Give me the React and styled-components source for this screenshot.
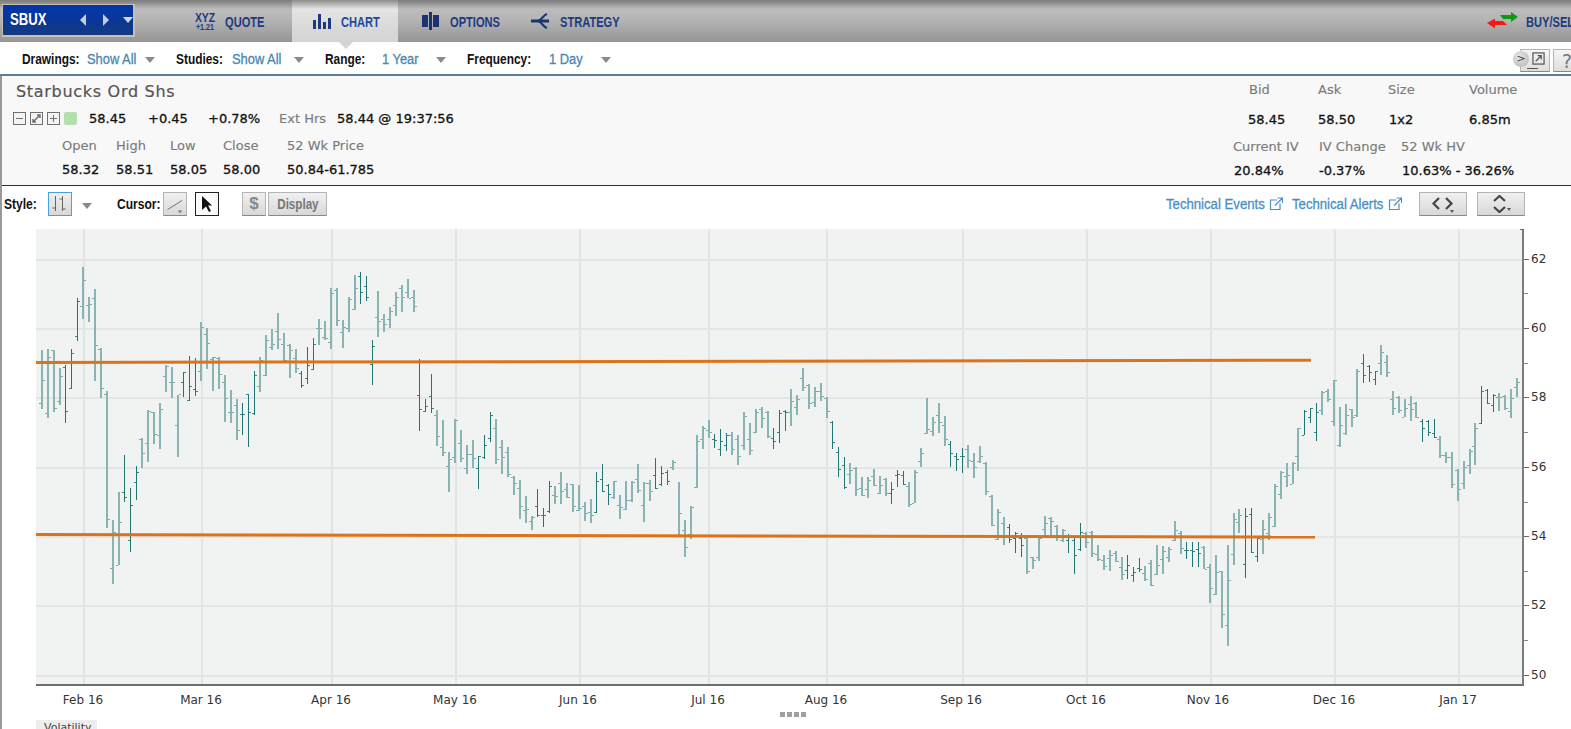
import React from 'react';
import styled, { createGlobalStyle } from 'styled-components';

// high, low, open, close as y pixels of the plot
const bars = [
    [350,409,403,380],[349,418,413,357],[350,412,350,408],[368,405,401,376],[365,423,367,411],[349,389,388,353],[298,341,336,301],[267,319,306,280],[297,322,305,304],[289,381,298,345],
    [348,398,349,388],[391,528,394,519],[520,584,568,532],[492,565,565,522],[455,502,492,497],[488,552,540,505],[466,500,482,472],[438,468,439,453],[410,462,443,411],[412,444,412,434],
    [403,449,435,409],[365,392,376,366],[367,398,382,382],[395,457,425,394],[372,397,382,372],[356,401,400,386],[358,396,389,391],[322,381,371,327],[328,369,334,343],[357,391,359,357],
    [357,389,358,374],[375,422,382,398],[390,423,412,412],[399,440,405,430],[403,435,414,414],[394,447,394,412],[371,415,413,375],[357,392,386,360],[335,376,375,340],[329,350,347,344],
    [313,349,331,339],[333,361,344,360],[344,378,345,350],[349,373,358,368],[371,388,373,385],[347,384,378,365],[338,370,369,344],[319,345,328,328],[321,340,337,338],[288,349,342,293],
    [288,326,290,320],[320,348,332,327],[297,332,328,299],[275,310,309,288],[272,304,276,292],[276,301,286,297],[340,385,364,346],[291,337,317,321],[314,332,319,324],[307,328,319,311],
    [292,316,305,297],[285,312,288,297],[279,298,292,298],[290,312,297,306],[359,431,395,409],[399,412,411,406],[374,413,396,408],[410,446,415,436],[420,456,447,452],[452,492,466,459],
    [419,463,457,420],[430,462,443,458],[445,474,468,454],[440,468,454,458],[456,489,468,456],[435,459,457,445],[412,442,438,415],[419,464,428,459],[440,474,447,457],[447,477,452,474],
    [476,495,477,483],[480,519,488,506],[496,523,510,509],[516,530,521,517],[489,517,506,515],[508,527,515,515],[481,513,511,486],[486,504,495,496],[472,504,483,491],[483,498,489,497],
    [484,512,484,506],[485,511,510,508],[502,521,506,513],[499,523,512,515],[472,513,512,481],[464,492,479,491],[484,505,485,494],[481,499,497,481],[495,519,505,507],[481,510,509,500],
    [481,502,500,482],[464,493,479,490],[482,522,505,483],[480,501,483,491],[458,489,475,488],[466,486,484,473],[470,485,472,481],[460,470,467,462],[482,535,535,513],[520,557,530,547],
    [506,539,534,507],[435,488,487,441],[426,449,439,428],[420,438,430,432],[434,448,439,440],[429,456,449,441],[433,451,445,435],[432,455,435,449],[435,465,439,456],[412,450,445,416],
    [423,455,439,450],[409,433,432,412],[407,428,409,418],[411,438,412,436],[428,449,438,441],[410,443,432,413],[410,431,411,412],[389,426,412,401],[395,415,407,399],[368,391,378,387],
    [384,409,385,403],[387,407,402,391],[383,401,391,396],[397,418,398,411],[421,449,422,442],[447,477,452,469],[457,489,465,487],[463,484,474,470],[467,496,468,489],[477,496,488,495],
    [477,498,489,480],[469,486,476,485],[476,494,493,485],[478,496,479,493],[482,504,493,489],[470,487,475,474],[471,485,475,484],[482,507,486,504],[470,503,503,472],[448,467,461,453],
    [398,434,433,429],[417,436,431,422],[403,433,415,422],[416,446,425,439],[441,467,444,453],[453,471,456,459],[448,473,456,456],[445,468,449,460],[453,478,461,467],[446,463,461,456],
    [462,495,463,491],[495,526,496,525],[509,540,539,512],[517,545,523,537],[524,543,527,539],[532,553,538,533],[533,557,538,545],[537,574,538,571],[557,569,557,560],[537,561,557,538],
    [516,537,529,523],[517,537,518,521],[525,541,526,535],[529,542,540,530],[534,553,540,536],[537,574,540,555],[523,551,549,532],[532,548,533,542],[531,557,532,553],[545,561,554,559],
    [555,570,560,566],[550,571,558,555],[551,562,553,561],[557,580,567,574],[555,579,570,565],[567,582,575,572],[558,572,568,569],[566,581,573,579],[560,586,563,585],[545,575,574,565],
    [546,574,559,551],[547,562,557,549],[521,541,540,530],[531,554,533,548],[542,559,550,550],[542,567,550,551],[542,567,549,553],[546,569,547,569],[564,603,567,588],[555,595,594,572],
    [571,628,571,614],[545,646,625,580],[513,565,554,519],[509,533,522,515],[508,578,564,516],[508,553,514,552],[538,562,556,538],[520,554,539,529],[513,540,533,517],[484,527,526,486],
    [471,499,494,472],[463,487,476,475],[462,484,484,463],[428,471,456,428],[410,435,435,411],[408,423,417,408],[403,441,432,412],[391,415,410,392],[389,402,391,399],[380,426,421,380],
    [407,447,445,425],[404,435,433,415],[409,427,409,417],[369,417,415,371],[354,383,363,375],[365,382,366,372],[371,385,379,371],[345,375,363,352],[355,377,362,372],[391,415,399,408],
    [396,413,397,410],[399,417,417,408],[396,421,404,409],[402,418,403,417],[419,442,421,428],[420,436,421,432],[419,438,433,437],[436,458,439,455],[452,463,455,457],[452,488,457,484],
    [469,501,470,489],[461,489,483,467],[449,474,465,451],[423,465,446,428],[386,424,423,391],[389,404,390,403],[394,412,405,395],[393,411,397,397],[395,410,396,408],[389,418,411,398],
    [378,397,387,382],
];

const gridX = [83, 201, 331, 455, 579, 708, 826, 962, 1086, 1210, 1334, 1458];
const gridY = [259, 328, 397, 467, 536, 605, 675];
const months = [
    [83, 'Feb 16'], [201, 'Mar 16'], [331, 'Apr 16'], [455, 'May 16'], [578, 'Jun 16'], [708, 'Jul 16'],
    [826, 'Aug 16'], [961, 'Sep 16'], [1086, 'Oct 16'], [1208, 'Nov 16'], [1334, 'Dec 16'], [1458, 'Jan 17'],
];
const prices = [[259, 62], [328, 60], [397, 58], [467, 56], [536, 54], [605, 52], [675, 50]];
const minorY = [293, 363, 432, 502, 571, 640];

const StockChart = () => {
    return <ChartSvg viewBox="36 225 1535 485">
        <rect x="36" y="229" width="1487" height="455" fill="#f1f3f3" />
        {gridY.map(y => <rect key={y} x="36" y={y} width="1487" height="2" fill="#e4e6e6" />)}
        {gridX.map(x => <rect key={x} x={x} y="229" width="2" height="455" fill="#e2e4e4" />)}
        {bars.map((bar, i) => {
            const x = 42 + 5.899 * i;
            const dark = [4, 5, 6].includes(i % 10);
            const px = dark ? Math.floor(x) : Math.round(x) - 1;
            const w = dark ? 1 : 2;
            return <g key={i}>
                <rect x={px} y={bar[0]} width={w} height={bar[1] - bar[0]} fill={dark ? '#217673' : '#8ab4b3'} />
                <rect x={px - 2} y={bar[2]} width="2" height="1" fill={dark ? '#3a8784' : '#7dabaa'} />
                <rect x={px + w} y={bar[3]} width="2" height="1" fill={dark ? '#3a8784' : '#7dabaa'} />
            </g>;
        })}
        <TrendLine x1="36" y1="362.500" x2="1311" y2="360.300" />
        <TrendLine x1="36" y1="534.500" x2="1315" y2="537" />
        <rect x="36" y="684" width="1488" height="2" fill="#6e6e6e" />
        <rect x="1522" y="229" width="2" height="456" fill="#7c7c7c" />
        <path d="M1524 229h-4" stroke="#666" fill="none" />
        {prices.map(([y]) => <rect key={y} x="1524" y={y} width="5" height="1" fill="#666" />)}
        {minorY.map(y => <rect key={y} x="1524" y={y} width="4" height="1" fill="#888" />)}
        {prices.map(([y, label]) => <AxisText key={label} x="1531" y={y + 4}>{label}</AxisText>)}
        {months.map(([x, label]) => <AxisText key={label} x={x} y="704" textAnchor="middle">{label}</AxisText>)}
    </ChartSvg>;
};

const ChartIcon = () => <svg width="18" height="16" viewBox="0 0 18 16" fill="#1d3a80">
    <rect x="0" y="7" width="3" height="9" /><rect x="5" y="1" width="3" height="15" /><rect x="10" y="9" width="3" height="7" /><rect x="15" y="5" width="3" height="11" />
</svg>;

const OptionsIcon = () => <svg width="18" height="18" viewBox="0 0 18 18" fill="#1b3371">
    <rect x="0" y="3" width="6" height="12" /><rect x="7" y="0" width="3" height="18" /><rect x="11" y="3" width="6" height="12" />
</svg>;

const StrategyIcon = () => <svg width="19" height="18" viewBox="0 0 19 18" fill="none" stroke="#1b3371" strokeWidth="2">
    <path d="M0 9h18" strokeWidth="3" /><path d="M7 9C11 8 12 3 16 2M7 9c4 1 5 6 9 7" />
</svg>;

const BuySellIcon = () => <svg width="31" height="18" viewBox="0 0 31 18">
    <path d="M13 3h11V0l7 5-7 5V7H16z" fill="#0c9a12" />
    <path d="M20 13H8v3.500L0 11l8-4.500V9h8z" fill="#f01a1a" />
</svg>;

const LinkIcon = () => <svg width="14" height="14" viewBox="0 0 14 14" fill="none" stroke="#4a90c4" strokeWidth="1.2">
    <path d="M8 3H1.500v9.500H11V6.500M6 8.500L13 1.500M8.500 1h5v5" />
</svg>;

const StyleIcon = () => <svg width="18" height="16" viewBox="0 0 18 16" fill="none" stroke="#666" strokeWidth="1">
    <path d="M4.500 0v15M1.500 12h3M11.500 0v15M8.500 3h3M11.500 13h3" />
</svg>;

const LineToolIcon = () => <svg width="24" height="22" viewBox="0 0 24 22" fill="none" stroke="#666" strokeWidth="1">
    <path d="M4 17L20 7" /><path d="M15 18h5l-2.500 3z" fill="#777" stroke="none" />
</svg>;

const PointerIcon = () => <svg width="12" height="16" viewBox="0 0 12 16" fill="#111">
    <path d="M1 0l10 9.500H7l3 5.500-2 1-3-5.500-4 3.500z" />
</svg>;

const HArrowsIcon = () => <svg width="24" height="18" viewBox="0 0 24 18" fill="none" stroke="#444" strokeWidth="2.200">
    <path d="M8 3L2.500 8.500 8 14M15 3l5.500 5.500L15 14" /><path d="M19 15h4l-2 3z" fill="#555" stroke="none" />
</svg>;

const VArrowsIcon = () => <svg width="24" height="18" viewBox="0 0 24 18" fill="none" stroke="#444" strokeWidth="2.200">
    <path d="M5 6l5.500-5L16 6M5 12l5.500 5 5.500-5" /><path d="M18 13h4l-2 3z" fill="#555" stroke="none" />
</svg>;

const BoxIcon = ({ kind }) => <svg width="13" height="13" viewBox="0 0 13 13" fill="none" stroke="#707070">
    <rect x="0.500" y="0.500" width="12" height="12" fill="#f4f4f4" />
    {kind === 'minus' && <path d="M3 6.500h7" />}
    {kind === 'plus' && <path d="M3 6.500h7M6.500 3v7" />}
    {kind === 'pop' && <path d="M3 10L10 3M7 3h3v3M3 7v3h3" strokeWidth="1.500" />}
</svg>;

const App = () => {
    return <Page>
        <GlobalStyle />
        <Nav>
            <Ticker>
                <TickerName>SBUX</TickerName>
                <TickerArrow $dir="left" />
                <TickerArrow $dir="right" />
                <TickerDrop />
            </Ticker>
            <NavItem $width={157} $pad={60}>
                <QuoteIcon><span>XYZ</span><small>+1.21</small></QuoteIcon>
                <NavLabel>QUOTE</NavLabel>
            </NavItem>
            <NavItem $width={106} $pad={21} $active>
                <ChartIcon />
                <NavLabel>CHART</NavLabel>
                <TabCaret />
            </NavItem>
            <NavItem $width={118} $pad={24}>
                <OptionsIcon />
                <NavLabel>OPTIONS</NavLabel>
            </NavItem>
            <NavItem $width={120} $pad={15}>
                <StrategyIcon />
                <NavLabel>STRATEGY</NavLabel>
            </NavItem>
            <BuySell>
                <BuySellIcon />
                <NavLabel>BUY/SELL</NavLabel>
            </BuySell>
        </Nav>

        <Filters>
            <FilterGroup $width={154}>
                <FilterLabel $width={65}>Drawings:</FilterLabel>
                <FilterValue $width={58}>Show All</FilterValue>
                <Caret />
            </FilterGroup>
            <FilterGroup $width={149}>
                <FilterLabel $width={56}>Studies:</FilterLabel>
                <FilterValue $width={62}>Show All</FilterValue>
                <Caret />
            </FilterGroup>
            <FilterGroup $width={142}>
                <FilterLabel $width={57}>Range:</FilterLabel>
                <FilterValue $width={54}>1 Year</FilterValue>
                <Caret />
            </FilterGroup>
            <FilterGroup $width={150}>
                <FilterLabel $width={82}>Frequency:</FilterLabel>
                <FilterValue $width={52}>1 Day</FilterValue>
                <Caret />
            </FilterGroup>
            <WindowButtons>
                <RoundToggle>&gt;</RoundToggle>
                <WindowButton $end>
                    <svg width="13" height="13" viewBox="0 0 14 14" fill="none" stroke="#555" strokeWidth="1.300">
                        <rect x="1" y="1" width="12" height="12" /><path d="M4 10l6-6M6 4h4v4" />
                    </svg>
                    <WindowDash />
                </WindowButton>
                <WindowButton>?</WindowButton>
            </WindowButtons>
        </Filters>

        <Content>
            <QuotePanel>
                <QuoteLeft>
                    <Title>Starbucks Ord Shs</Title>
                    <QuoteRow $pad={13} $height={24}>
                        <BoxIcons>
                            <BoxIcon kind="minus" />
                            <BoxIcon kind="pop" />
                            <BoxIcon kind="plus" />
                            <GreenDot />
                        </BoxIcons>
                        <Value $width={59}>58.45</Value>
                        <Value $width={60}>+0.45</Value>
                        <Value $width={71}>+0.78%</Value>
                        <Muted $width={58}>Ext Hrs</Muted>
                        <Value>58.44 @ 19:37:56</Value>
                    </QuoteRow>
                    <QuoteRow $pad={62} $height={24} $top={3}>
                        <Muted $width={54}>Open</Muted>
                        <Muted $width={54}>High</Muted>
                        <Muted $width={53}>Low</Muted>
                        <Muted $width={64}>Close</Muted>
                        <Muted>52 Wk Price</Muted>
                    </QuoteRow>
                    <QuoteRow $pad={62} $height={24}>
                        <Value $width={54}>58.32</Value>
                        <Value $width={54}>58.51</Value>
                        <Value $width={53}>58.05</Value>
                        <Value $width={64}>58.00</Value>
                        <Value>50.84-61.785</Value>
                    </QuoteRow>
                </QuoteLeft>
                <QuoteRight>
                    <QuoteRow $pad={16} $height={24}>
                        <Muted $width={69}>Bid</Muted>
                        <Muted $width={70}>Ask</Muted>
                        <Muted $width={81}>Size</Muted>
                        <Muted>Volume</Muted>
                    </QuoteRow>
                    <QuoteRow $pad={15} $height={36}>
                        <Value $width={70}>58.45</Value>
                        <Value $width={71}>58.50</Value>
                        <Value $width={80}>1x2</Value>
                        <Value>6.85m</Value>
                    </QuoteRow>
                    <QuoteRow $height={18}>
                        <Muted $width={86}>Current IV</Muted>
                        <Muted $width={82}>IV Change</Muted>
                        <Muted>52 Wk HV</Muted>
                    </QuoteRow>
                    <QuoteRow $pad={1} $height={30}>
                        <Value $width={85}>20.84%</Value>
                        <Value $width={83}>-0.37%</Value>
                        <Value>10.63% - 36.26%</Value>
                    </QuoteRow>
                </QuoteRight>
            </QuotePanel>

            <ChartTools>
                <ToolLabel $width={44}>Style:</ToolLabel>
                <ToolButton $selected><StyleIcon /></ToolButton>
                <Caret $left={10} />
                <ToolLabel $width={46} $left={25}>Cursor:</ToolLabel>
                <ToolButton><LineToolIcon /></ToolButton>
                <ToolButton $black $left={8}><PointerIcon /></ToolButton>
                <ToolButton $left={23}><DollarSign>$</DollarSign></ToolButton>
                <ToolButton $left={2} $width={59}><DisplayText>Display</DisplayText></ToolButton>
                <TechLinks>
                    <TechLink><TechText $width={99}>Technical Events</TechText><LinkIcon /></TechLink>
                    <TechLink><TechText $width={92}>Technical Alerts</TechText><LinkIcon /></TechLink>
                </TechLinks>
                <ToolButton $width={48}><HArrowsIcon /></ToolButton>
                <ToolButton $width={48} $left={10}><VArrowsIcon /></ToolButton>
            </ChartTools>

            <StockChart />

            <ChartFooter>
                <VolatilityTab>Volatility</VolatilityTab>
                <Grip />
            </ChartFooter>
        </Content>
    </Page>;
};

export default App;

const GlobalStyle = createGlobalStyle`
    html, body {
        margin: 0;
        background: #fff;
        overflow: hidden;
    }
`;

const Page = styled.div`
    width: 1571px;
    height: 729px;
    overflow: hidden;
    font-family: "DejaVu Sans", sans-serif;
`;

const Nav = styled.div`
    display: flex;
    height: 42px;
    border-bottom: 1px solid #fff;
    background: linear-gradient(#7d7d7d 0, #8e8e8e 3px, #bcbcbc 9px, #b4b4b4 20px, #959595 42px);
    font-family: "Liberation Sans", sans-serif;
    font-weight: 700;
    font-size: 15px;
    color: #1d3a80;
`;

const NavLabel = styled.span`
    flex: none;
    white-space: nowrap;
    transform: scaleX(0.74);
    transform-origin: left center;
`;

const Ticker = styled.div`
    display: flex;
    flex: none;
    align-items: center;
    box-sizing: border-box;
    width: 133px;
    height: 33px;
    margin: 4px 0 0 2px;
    border: 1px solid #c9c0b4;
    border-width: 1px 2px 2px 1px;
    background: linear-gradient(#0036ad, #14397f);
`;

const TickerName = styled.div`
    width: 95px;
    padding-left: 7px;
    font-size: 16px;
    color: #fff;
    transform: scaleX(0.82);
    transform-origin: 7px center;
`;

const TickerArrow = styled.div`
    width: 0;
    height: 0;
    margin-right: 17px;
    border-top: 6px solid transparent;
    border-bottom: 6px solid transparent;
    ${props => props.$dir === 'left' ? 'border-right: 6px solid #c8cbd8;' : 'border-left: 6px solid #c8cbd8;'}
`;

const TickerDrop = styled.div`
    width: 0;
    height: 0;
    margin-left: -3px;
    border-left: 5px solid transparent;
    border-right: 5px solid transparent;
    border-top: 6px solid #d5d8e2;
`;

const NavItem = styled.div`
    position: relative;
    display: flex;
    flex: none;
    align-items: center;
    gap: 10px;
    box-sizing: border-box;
    width: ${props => props.$width}px;
    padding-left: ${props => props.$pad}px;
    ${props => props.$active && `
        background: linear-gradient(#8c8c8c 0, #e4e4e4 9px, #d8d8d8 30px, #d4d4d4 42px);
        color: #1d4a9c;
    `}

    svg {
        flex: none;
    }
`;

const TabCaret = styled.div`
    position: absolute;
    z-index: 2;
    left: 47px;
    top: 42px;
    width: 0;
    height: 0;
    border-left: 7px solid transparent;
    border-right: 7px solid transparent;
    border-top: 7px solid #d4d4d4;
`;

const QuoteIcon = styled.div`
    display: flex;
    flex: none;
    flex-direction: column;
    align-items: center;
    width: 20px;
    color: #1d3a80;
    font-size: 13px;
    line-height: 11px;
    transform: scaleX(0.8);

    small {
        font-size: 9px;
        line-height: 8px;
    }
`;

const BuySell = styled.div`
    display: flex;
    flex: none;
    align-items: center;
    gap: 8px;
    width: 84px;
    margin-left: auto;
    overflow: hidden;

    svg {
        flex: none;
    }
`;

const Filters = styled.div`
    position: relative;
    display: flex;
    align-items: center;
    box-sizing: border-box;
    height: 33px;
    padding-left: 22px;
    border-bottom: 2px solid #5f7d93;
    background: #fff;
`;

const FilterGroup = styled.div`
    display: flex;
    align-items: center;
    width: ${props => props.$width}px;
    font-family: "Liberation Sans", sans-serif;
    font-size: 14px;
`;

const FilterLabel = styled.div`
    width: ${props => props.$width}px;
    font-weight: 700;
    color: #111;
    white-space: nowrap;
    transform: scaleX(0.85);
    transform-origin: left center;
`;

const FilterValue = styled.div`
    width: ${props => props.$width}px;
    font-weight: 400;
    color: #4a87b0;
    -webkit-text-stroke: 0.3px #4a87b0;
    white-space: nowrap;
    transform: scaleX(0.92);
    transform-origin: left center;
`;

const Caret = styled.div`
    width: 0;
    height: 0;
    margin-top: 3px;
    margin-left: ${props => props.$left || 0}px;
    border-left: 5px solid transparent;
    border-right: 5px solid transparent;
    border-top: 6px solid #8a8a8a;
`;

const WindowButtons = styled.div`
    display: flex;
    gap: 3px;
    margin-top: 4px;
    margin-left: auto;
    margin-right: -12px;
`;

const WindowButton = styled.div`
    position: relative;
    display: flex;
    align-items: center;
    justify-content: ${props => props.$end ? 'flex-end' : 'center'};
    box-sizing: border-box;
    width: 30px;
    height: 23px;
    padding-right: ${props => props.$end ? 4 : 2}px;
    border: 1px solid #b5b5b5;
    border-bottom-color: #888;
    background: linear-gradient(#f6f6f6, #dedede);
    font-size: 19px;
    color: #777;

    svg {
        margin-bottom: 4px;
    }
`;

const WindowDash = styled.div`
    position: absolute;
    left: 6px;
    bottom: 2px;
    width: 11px;
    height: 1px;
    background: #555;
`;

const RoundToggle = styled.div`
    position: absolute;
    z-index: 1;
    right: 42px;
    top: 8px;
    width: 16px;
    height: 16px;
    border-radius: 50%;
    background: radial-gradient(circle at 40% 35%, #e6e6e6, #b4b4b4);
    text-align: center;
    font-size: 11px;
    line-height: 15px;
    color: #444;
`;

const Content = styled.div`
    border-left: 2px solid #999;
`;

const QuotePanel = styled.div`
    display: flex;
    justify-content: space-between;
    box-sizing: border-box;
    height: 110px;
    border-bottom: 1px solid #1d2c5e;
    background: #f8f8f8;
    font-size: 13px;
`;

const QuoteLeft = styled.div`
    margin-left: -2px;
`;

const QuoteRight = styled.div`
    width: 338px;
    padding-top: 1px;
`;

const Title = styled.div`
    height: 30px;
    padding-left: 16px;
    font-size: 16px;
    line-height: 32px;
    letter-spacing: 0.7px;
    color: #555;
    -webkit-text-stroke: 0.2px #555;
`;

const QuoteRow = styled.div`
    display: flex;
    align-items: center;
    height: ${props => props.$height}px;
    margin-top: ${props => props.$top || 0}px;
    padding-left: ${props => props.$pad || 0}px;
`;

const BoxIcons = styled.div`
    display: flex;
    align-items: center;
    gap: 4px;
    width: 76px;
`;

const GreenDot = styled.div`
    width: 13px;
    height: 13px;
    border-radius: 2px;
    background: #b5e0ae;
`;

const Muted = styled.div`
    flex: none;
    width: ${props => props.$width ? `${props.$width}px` : 'auto'};
    color: #7b7b7b;
    -webkit-text-stroke: 0.15px #7b7b7b;
`;

const Value = styled.div`
    flex: none;
    width: ${props => props.$width ? `${props.$width}px` : 'auto'};
    color: #111;
    -webkit-text-stroke: 0.3px #111;
`;

const ChartTools = styled.div`
    display: flex;
    align-items: center;
    box-sizing: border-box;
    height: 39px;
    padding: 0 46px 3px 2px;
`;

const ToolLabel = styled.div`
    width: ${props => props.$width}px;
    margin-left: ${props => props.$left || 0}px;
    font-family: "Liberation Sans", sans-serif;
    font-size: 14px;
    font-weight: 700;
    color: #111;
    white-space: nowrap;
    transform: scaleX(0.86);
    transform-origin: left center;
`;

const ToolButton = styled.div`
    display: flex;
    flex: none;
    align-items: center;
    justify-content: center;
    box-sizing: border-box;
    width: ${props => props.$width || 24}px;
    height: 24px;
    margin-left: ${props => props.$left || 0}px;
    border: 1px solid ${props => props.$selected ? '#4a9fe0' : props.$black ? '#222' : '#b5b5b5'};
    border-bottom-color: ${props => props.$selected ? '#4a9fe0' : props.$black ? '#222' : '#888'};
    background: ${props => props.$black ? '#fafafa' : 'linear-gradient(#f0f0f0, #d8d8d8)'};
`;

const DollarSign = styled.span`
    font-family: "Liberation Sans", sans-serif;
    font-size: 17px;
    font-weight: 700;
    color: #888;
`;

const DisplayText = styled.span`
    font-family: "Liberation Sans", sans-serif;
    font-size: 14px;
    font-weight: 700;
    color: #777;
    transform: scaleX(0.83);
`;

const TechLinks = styled.div`
    display: flex;
    gap: 9px;
    margin-left: auto;
    margin-right: 17px;
`;

const TechLink = styled.div`
    display: flex;
    align-items: center;
    gap: 4px;
    font-family: "Liberation Sans", sans-serif;
    font-size: 14px;
    color: #4a90c4;
    -webkit-text-stroke: 0.3px #4a90c4;
`;

const TechText = styled.span`
    width: ${props => props.$width}px;
    white-space: nowrap;
    transform: scaleX(0.94);
    transform-origin: left center;
`;

const ChartSvg = styled.svg`
    display: block;
    width: 1535px;
    height: 485px;
    margin-left: 34px;
    shape-rendering: crispEdges;
`;

const TrendLine = styled.line`
    stroke: #dc731a;
    stroke-width: 3;
    shape-rendering: auto;
`;

const AxisText = styled.text`
    font-family: "DejaVu Sans", sans-serif;
    font-size: 12px;
    fill: #333;
    shape-rendering: auto;
`;

const ChartFooter = styled.div`
    display: flex;
    height: 19px;
    padding-left: 34px;
    overflow: hidden;
`;

const VolatilityTab = styled.div`
    box-sizing: border-box;
    width: 61px;
    height: 20px;
    margin-top: 10px;
    padding-left: 8px;
    background: #eeeeee;
    font-size: 11px;
    line-height: 16px;
    color: #444;
`;

const Grip = styled.div`
    width: 26px;
    height: 5px;
    margin: 2px 0 0 683px;
    background: repeating-linear-gradient(90deg, #a0a0a0 0, #a0a0a0 5px, transparent 5px, transparent 7px);
`;
